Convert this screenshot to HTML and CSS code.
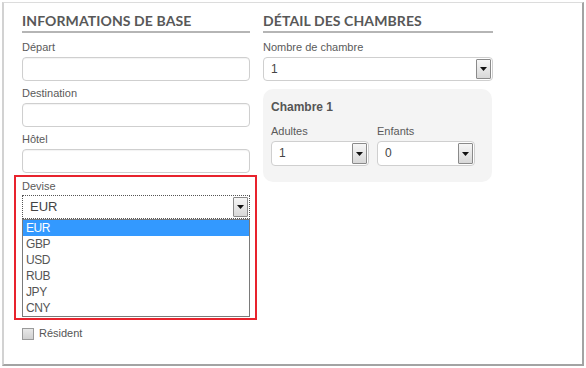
FILE: index.html
```html
<!DOCTYPE html>
<html lang="fr">
<head>
<meta charset="utf-8">
<title>Recherche hôtel</title>
<link rel="stylesheet" href="styles.css">
</head>
<body>
<div class="frame">
  <div class="col col-left">
    <h2 class="heading">Informations de base</h2>
    <div class="field">
      <label class="label">Départ</label>
      <div class="input"></div>
    </div>
    <div class="field">
      <label class="label">Destination</label>
      <div class="input"></div>
    </div>
    <div class="field">
      <label class="label">Hôtel</label>
      <div class="input"></div>
    </div>
    <div class="highlight">
      <label class="label">Devise</label>
      <div class="select select-focus">
        <span class="select-value">EUR</span>
        <span class="select-btn"><svg width="7" height="4" viewBox="0 0 7 4"><path d="M0 0H7L3.5 4Z" fill="#111"/></svg></span>
      </div>
      <ul class="list">
        <li class="list-item is-selected">EUR</li>
        <li class="list-item">GBP</li>
        <li class="list-item">USD</li>
        <li class="list-item">RUB</li>
        <li class="list-item">JPY</li>
        <li class="list-item">CNY</li>
      </ul>
    </div>
    <div class="check">
      <span class="check-box"></span>
      <span class="check-label">Résident</span>
    </div>
  </div>
  <div class="col col-right">
    <h2 class="heading">Détail des chambres</h2>
    <div class="field">
      <label class="label">Nombre de chambre</label>
      <div class="select">
        <span class="select-value">1</span>
        <span class="select-btn"><svg width="7" height="4" viewBox="0 0 7 4"><path d="M0 0H7L3.5 4Z" fill="#111"/></svg></span>
      </div>
    </div>
    <div class="room">
      <div class="room-title">Chambre 1</div>
      <div class="room-row">
        <div class="room-field">
          <label class="label">Adultes</label>
          <div class="select">
            <span class="select-value">1</span>
            <span class="select-btn"><svg width="7" height="4" viewBox="0 0 7 4"><path d="M0 0H7L3.5 4Z" fill="#111"/></svg></span>
          </div>
        </div>
        <div class="room-field">
          <label class="label">Enfants</label>
          <div class="select">
            <span class="select-value">0</span>
            <span class="select-btn"><svg width="7" height="4" viewBox="0 0 7 4"><path d="M0 0H7L3.5 4Z" fill="#111"/></svg></span>
          </div>
        </div>
      </div>
    </div>
  </div>
</div>
</body>
</html>
```

FILE: styles.css
```css
html, body {
  margin: 0;
  padding: 0;
  background: #fff;
}

body {
  font-family: "Liberation Sans", Arial, sans-serif;
  color: #555;
}

.frame {
  box-sizing: border-box;
  margin: 2px 0 0 2px;
  width: 582px;
  height: 364px;
  border-top: 1px solid #dcdcdc;
  border-left: 2px solid #d2d2d2;
  border-right: 2px solid #a3a3a3;
  border-bottom: 2px solid #a3a3a3;
  padding: 9px 0 0 18px;
  display: flex;
  gap: 13px;
  align-items: flex-start;
}

.col {
  display: flex;
  flex-direction: column;
}

.col-left { width: 228px; }
.col-right { width: 230px; }

.heading {
  margin: 0;
  font-family: Lato, "Liberation Sans", sans-serif;
  font-weight: 700;
  font-size: 14px;
  line-height: 17px;
  text-transform: uppercase;
  color: #585858;
  padding-bottom: 2px;
  border-bottom: 2px solid #b5b5b5;
  letter-spacing: 0.1px;
}

.field {
  display: flex;
  flex-direction: column;
}

.label {
  display: block;
  font-size: 11px;
  line-height: 13px;
  color: #5a5a5a;
  margin: 8px 0 3px;
}

.col-left .field + .field .label { margin-top: 6px; }

.input {
  box-sizing: border-box;
  height: 24px;
  border: 1px solid #cfcfcf;
  border-radius: 4px;
  background: #fff;
  box-shadow: inset 0 1px 1px rgba(0,0,0,0.05);
}

.select {
  box-sizing: border-box;
  height: 24px;
  border: 1px solid #cfcfcf;
  border-radius: 4px;
  background: #fff;
  display: flex;
  align-items: stretch;
  padding: 1px;
}

.select-value {
  flex: 1;
  font-size: 12px;
  line-height: 20px;
  padding-left: 6px;
  color: #444;
}

.select-btn {
  width: 15px;
  box-sizing: border-box;
  border: 1px solid #8a8a8a;
  border-radius: 1px;
  background: linear-gradient(#f6f6f6, #d8d8d8);
  display: flex;
  align-items: center;
  justify-content: center;
}

.highlight {
  margin: 2px -7px 0 -8px;
  padding: 3px 5px 1px 6px;
  border: 2px solid #e8232d;
  display: flex;
  flex-direction: column;
}

.highlight .label { margin: 0 0 2px; }

.select-focus {
  border: 1px dotted #555;
  border-radius: 0;
  height: 24px;
}

.select-focus .select-value { font-size: 13px; }

.list {
  list-style: none;
  margin: 0;
  padding: 0;
  border: 1px solid #7a7a7a;
  background: #fff;
}

.list-item {
  height: 16px;
  line-height: 16px;
  font-size: 12px;
  letter-spacing: -0.4px;
  padding-left: 3px;
  color: #555;
}

.list-item.is-selected {
  background: #3399ff;
  color: #fff;
}

.check {
  display: flex;
  align-items: center;
  gap: 5px;
  margin-top: 7px;
}

.check-box {
  box-sizing: border-box;
  width: 12px;
  height: 12px;
  border: 1px solid #9a9a9a;
  background: linear-gradient(#e8e8e8, #d0d0d0);
}

.check-label {
  font-size: 11px;
  line-height: 13px;
  color: #555;
}

.room {
  margin-top: 8px;
  background: #f4f4f4;
  border-radius: 10px;
  padding: 11px 8px 16px;
  box-sizing: border-box;
  width: 229px;
}

.room-title {
  font-size: 12px;
  font-weight: 700;
  line-height: 14px;
  color: #555;
}

.room-row {
  display: flex;
  gap: 8px;
}

.room-field {
  width: 98px;
  display: flex;
  flex-direction: column;
}

.room-field .label { margin: 11px 0 3px; }

.room-field .select { height: 25px; }
```
